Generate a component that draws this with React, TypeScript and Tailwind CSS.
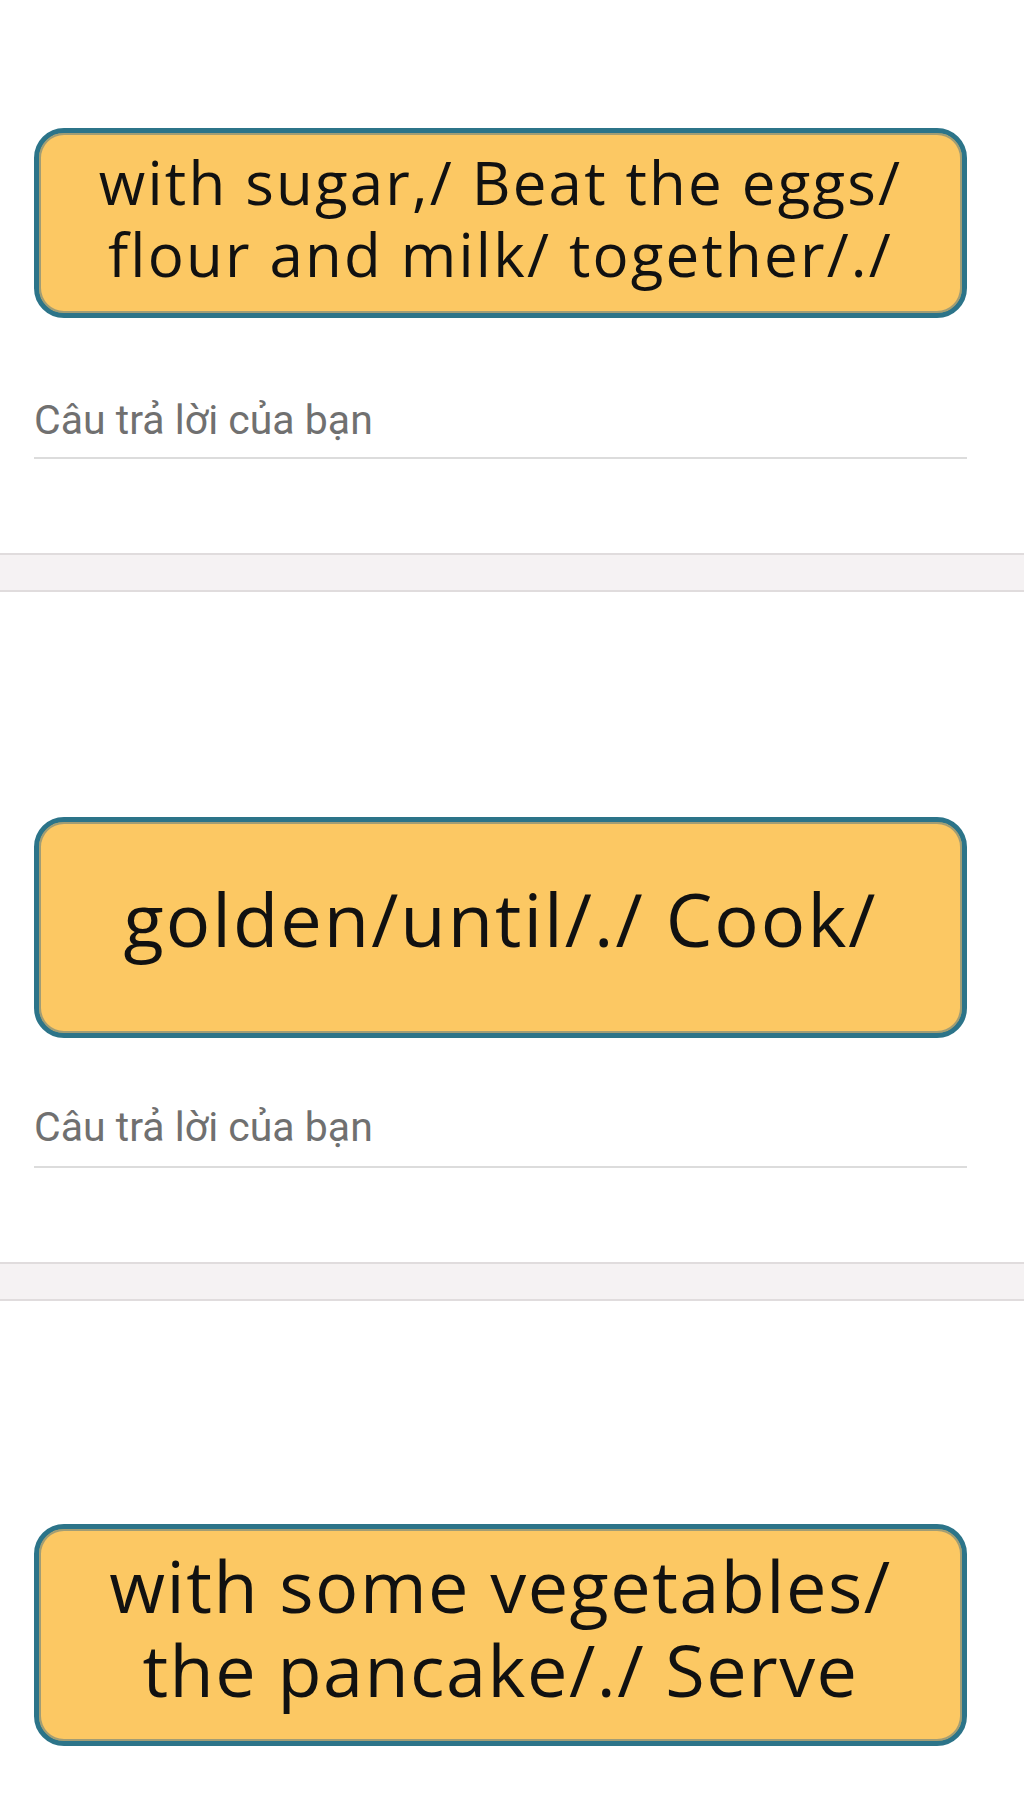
const boxFont = { fontFamily: '"Open Sans", "DejaVu Sans", sans-serif' };

function PhraseCard({ lines, h, size }: { lines: string[]; h: string; size: string }) {
  return (
    <div
      className={`w-[933px] ${h} rounded-[30px] border-[5px] border-[#2c7489] bg-[#fcc863] shadow-[inset_0_0_0_2px_#a29d74] flex items-center justify-center text-[#111] ${size}`}
      style={boxFont}
    >
      <p className="text-center whitespace-nowrap">
        {lines.map((l, i) => (
          <span key={l}>
            {i > 0 && <br />}
            {l}
          </span>
        ))}
      </p>
    </div>
  );
}

function Answer({ top, gap }: { top: string; gap: string }) {
  return (
    <div className="flex flex-col">
      <div
        className={`${top} text-[41px] leading-[46px] text-[#707070]`}
        style={{ fontFamily: 'Roboto, "Noto Sans", sans-serif' }}
      >
        Câu trả lời của bạn
      </div>
      <div className={`${gap} w-[933px] h-[2px] bg-[#dcdcdc]`} />
    </div>
  );
}

function Divider() {
  return <div className="mt-[94px] h-[39px] border-y-2 border-[#e0dcdd] bg-[#f5f2f3]" />;
}

export default function App() {
  return (
    <div className="bg-white min-h-screen w-[1024px] h-[1805px] overflow-hidden">
      <div className="px-[34px] pt-[128px]">
        <PhraseCard
          lines={["with sugar,/ Beat the eggs/", "flour and milk/ together/./"]}
          h="h-[190px]"
          size="text-[60px] leading-[72px] tracking-[2.2px] pb-[10px]"
        />
        <Answer top="mt-[79px]" gap="mt-[14px]" />
      </div>
      <Divider />

      <div className="px-[34px] pt-[225px]">
        <PhraseCard
          lines={["golden/until/./ Cook/"]}
          h="h-[221px]"
          size="text-[74px] leading-[80px] tracking-[2px] pb-[18px]"
        />
        <Answer top="mt-[66px]" gap="mt-[16px]" />
      </div>
      <Divider />

      <div className="px-[34px] pt-[223px]">
        <PhraseCard
          lines={["with some vegetables/", "the pancake/./ Serve"]}
          h="h-[222px]"
          size="text-[72px] leading-[84px] tracking-[1.5px] pb-[16px]"
        />
      </div>
    </div>
  );
}
